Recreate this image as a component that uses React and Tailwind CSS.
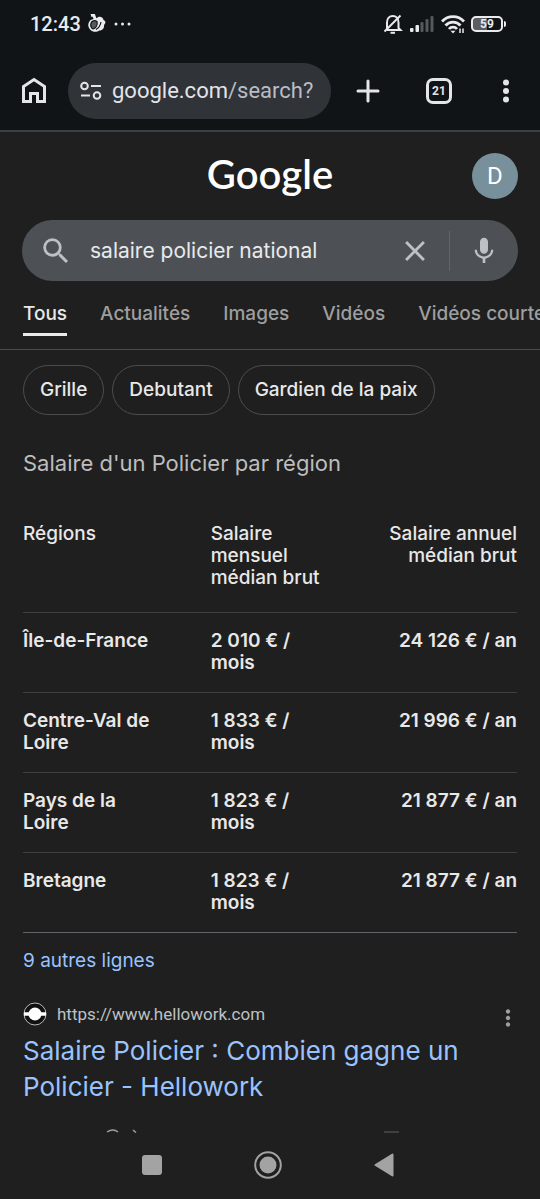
import React, { useState } from "react";
import { MdSearch, MdClose, MdMic, MdMoreVert } from "react-icons/md";

const tabs = ["Tous", "Actualités", "Images", "Vidéos", "Vidéos courtes"];

const chips = ["Grille", "Debutant", "Gardien de la paix"];

const rows = [
  { region: "Île-de-France", monthly: "2 010 € / mois", yearly: "24 126 € / an" },
  { region: "Centre-Val de Loire", monthly: "1 833 € / mois", yearly: "21 996 € / an" },
  { region: "Pays de la Loire", monthly: "1 823 € / mois", yearly: "21 877 € / an" },
  { region: "Bretagne", monthly: "1 823 € / mois", yearly: "21 877 € / an" },
];

const StatusBar = () => (
  <div className="flex h-12 items-center justify-between pl-[30px] pr-[34px] text-[#e8eaed]">
    <div className="flex items-center gap-1.5">
      <span className="font-['Roboto',sans-serif] text-xl font-medium leading-6">12:43</span>
      <svg width="20" height="20" viewBox="0 0 20 20" fill="none">
        <path d="M4 1.5l2.5-.8L8.5 6" stroke="currentColor" strokeWidth="3" />
        <path d="M10 4c2-2.5 6.5-1 6.5 2 2.5 1 2.5 3 .5 5 .5 3-1.5 5.5-4.5 5.5-3 2-7 1.5-9-.5-3-3-3-7 0-10z" fill="currentColor" />
        <path d="M4.5 8c-1.8 3.5-.5 6 1.5 7 3-1 4.8-4 4-7.500-1.500-1-4-1-5.500.5z" fill="#55595c" stroke="#101417" strokeWidth="1.2" />
        <path d="M14 8c-.5 3-2.5 6-5 7.5" stroke="#101417" strokeWidth="1.2" />
      </svg>
      <svg width="18" height="20" viewBox="0 0 18 20" fill="currentColor">
        <circle cx="3" cy="10" r="1.5" />
        <circle cx="9.5" cy="10" r="1.5" />
        <circle cx="16" cy="10" r="1.5" />
      </svg>
    </div>
    <div className="flex items-center gap-1.5">
      <svg width="20" height="20" viewBox="0 0 20 20" fill="none" stroke="currentColor" strokeWidth="2">
        <path d="M4 15V8.500C4 4.500 6.500 2 9.800 2s5.700 2.500 5.700 6.500V14l2 2H4" />
        <path d="M1.500 17.500L17.500 1.500" />
        <path d="M7.500 18.800h4.500" />
      </svg>
      <svg width="26" height="18" viewBox="0 0 26 18" fill="currentColor">
        <rect x="1" y="13" width="3.5" height="4" rx="1" />
        <rect x="6.5" y="10" width="3.5" height="7" rx="1" />
        <g fill="#55595c">
          <rect x="11.5" y="7" width="3" height="10" rx="1" />
          <rect x="16.5" y="4" width="3" height="13" rx="1" />
          <rect x="21.5" y="1" width="3" height="16" rx="1" />
        </g>
      </svg>
      <svg width="24" height="20" viewBox="0 0 24 20" fill="none" stroke="currentColor" strokeWidth="2.8">
        <path d="M1 7.5c6-6.500 16-6.500 22 0" />
        <path d="M4.500 11.5c4-4.500 11-4.500 15 0" />
        <path d="M8 15c2-2.500 6-2.500 8 0" />
        <path d="M12 19.5l-2.500-2.800h5z" fill="currentColor" stroke="none" />
        <path d="M19 14.5v4.500M22 14.5v4.500" strokeWidth="1.5" />
      </svg>
      <div className="flex items-center">
        <div className="flex h-4 w-8 items-center justify-center rounded-[5px] border-2 border-current bg-linear-to-r from-[#5a5e61] from-50% to-transparent to-50% font-['Roboto',sans-serif] text-xs font-bold">
          59
        </div>
        <div className="ml-px h-1.5 w-0.5 rounded-r bg-current" />
      </div>
    </div>
  </div>
);

const BrowserBar = () => (
  <div className="flex h-[84px] items-center border-b-2 border-[#3c4043] pl-5 pr-6 pt-1 text-[#e3e5ea]">
    <button type="button" aria-label="Accueil">
      <svg width="28" height="28" viewBox="0 0 28 28" fill="none" stroke="currentColor" strokeWidth="3">
        <path d="M3.5 24.5v-15L14 2.5l10.5 7v15h-7v-8h-7v8z" />
      </svg>
    </button>
    <div className="ml-5 flex h-14 min-w-0 flex-1 items-center gap-2.5 rounded-full bg-[#303338] pl-3 pr-3">
      <svg className="shrink-0" width="22" height="20" viewBox="0 0 22 20" fill="none" stroke="currentColor" strokeWidth="2">
        <circle cx="4.5" cy="5" r="3.3" />
        <path d="M11 5h10M1 14.5h9" />
        <circle cx="17" cy="14.5" r="3.3" />
      </svg>
      <button type="button" className="overflow-hidden whitespace-nowrap font-['Roboto',sans-serif] text-[22px] leading-7">
        google.com<span className="text-[#b9bdc6]">/search?</span>
      </button>
    </div>
    <button type="button" aria-label="Nouvel onglet" className="ml-6">
      <svg width="26" height="26" viewBox="0 0 26 26" stroke="currentColor" strokeWidth="3" strokeLinecap="round">
        <path d="M13 3v20M3 13h20" />
      </svg>
    </button>
    <button
      type="button"
      aria-label="Onglets ouverts"
      className="ml-[45px] flex size-[26px] items-center justify-center rounded-[7px] border-[3px] border-current font-['Roboto',sans-serif] text-xs font-bold"
    >
      21
    </button>
    <button type="button" aria-label="Menu" className="ml-11">
      <svg width="20" height="26" viewBox="0 0 20 26" fill="currentColor">
        <circle cx="10" cy="4.5" r="3" />
        <circle cx="10" cy="13" r="3" />
        <circle cx="10" cy="21.5" r="3" />
      </svg>
    </button>
  </div>
);

const SearchHeader = () => {
  const [query, setQuery] = useState("salaire policier national");

  return (
    <header className="px-[22px]">
      <div className="grid h-[88px] grid-cols-3 items-center">
        <span />
        <a href="#" className="justify-self-center pb-1 font-['Lato',sans-serif] text-[40px] font-semibold leading-12 text-white">
          Google
        </a>
        <button
          type="button"
          aria-label="Compte"
          className="flex size-[46px] items-center justify-center justify-self-end rounded-full bg-[#78909c] font-['Roboto',sans-serif] text-2xl text-white"
        >
          D
        </button>
      </div>
      <form onSubmit={(e) => e.preventDefault()} className="flex h-[61px] items-center rounded-full bg-[#4d5156] text-[#bdc1c6]">
        <button type="submit" aria-label="Rechercher" className="ml-[17px]">
          <MdSearch size={34} />
        </button>
        <input
          type="text"
          aria-label="Recherche"
          value={query}
          onChange={(e) => setQuery(e.target.value)}
          className="ml-[17px] min-w-0 flex-1 text-[21px] text-[#e8eaed] outline-none"
        />
        <button type="button" aria-label="Effacer" onClick={() => setQuery("")}>
          <MdClose size={34} />
        </button>
        <div className="ml-[17px] h-10 w-px bg-[#606368]" />
        <button type="button" aria-label="Recherche vocale" className="mx-[18px]">
          <MdMic size={32} />
        </button>
      </form>
    </header>
  );
};

const Tabs = () => (
  <nav className="flex gap-[33px] overflow-hidden border-b border-[#4a4d50] pb-[13px] pl-[23px] pt-5">
    {tabs.map((tab, i) => (
      <a
        key={tab}
        href="#"
        className={`whitespace-nowrap border-b-[3px] pb-1.5 text-[19px] font-medium leading-[26px] ${
          i === 0 ? "border-[#e8eaed] text-[#e8e8e8]" : "border-transparent text-[#9e9e9e]"
        }`}
      >
        {tab}
      </a>
    ))}
  </nav>
);

const SalaryTable = () => (
  <table className="mt-7 w-full table-fixed text-left align-top text-[19px] font-medium leading-[22px] text-[#e8e8e8]">
    <thead>
      <tr className="border-b border-[#3c4043] align-top">
        <th className="w-[38%] pb-[23px] pt-4 font-medium">Régions</th>
        <th className="w-[28%] pb-[23px] pt-4 font-medium">Salaire mensuel médian brut</th>
        <th className="w-[34%] pb-[23px] pl-6 pt-4 text-right font-medium">Salaire annuel médian brut</th>
      </tr>
    </thead>
    <tbody>
      {rows.map((row) => (
        <tr key={row.region} className="h-20 border-b border-[#3c4043] align-top font-semibold last:border-[#5f6368]">
          <td className="pr-12 pt-[17px]">{row.region}</td>
          <td className="pr-8 pt-[17px]">{row.monthly}</td>
          <td className="pt-[17px] text-right">{row.yearly}</td>
        </tr>
      ))}
    </tbody>
  </table>
);

const Result = () => (
  <article className="mt-6">
    <div className="flex items-center">
      <svg width="24" height="24" viewBox="0 0 24 24">
        <circle cx="12" cy="12" r="11" fill="#111" stroke="#b8b8b8" strokeWidth="1" />
        <path d="M1 12h22" stroke="#fff" strokeWidth="3.5" />
        <circle cx="12" cy="12" r="6.5" fill="#fff" />
      </svg>
      <cite className="ml-2.5 font-['Roboto',sans-serif] text-[17px] not-italic leading-6 text-[#bdc1c6]">
        https://www.hellowork.com
      </cite>
      <button type="button" aria-label="À propos de ce résultat" className="-mr-1 ml-auto mt-2 text-[#9e9e9e]">
        <MdMoreVert size={26} />
      </button>
    </div>
    <h3 className="mt-0.5 text-[26px] leading-9 text-[#99c3ff]">
      <a href="#">Salaire Policier : Combien gagne un Policier - Hellowork</a>
    </h3>
    {/* tops of the next line, hidden behind the navigation bar */}
    <svg className="mt-6 h-1 w-full" height="4" fill="none" stroke="#9e9e9e">
      <path d="M84 3q6-4 11 0M110 1l3 2.5" strokeWidth="1.5" />
      <path d="M361 3h15" stroke="#5f6368" />
    </svg>
  </article>
);

const NavigationBar = () => (
  <div className="mt-auto flex h-16 shrink-0 items-center justify-center gap-[91px] pb-1 pr-1 text-[#a3a3a3]">
    <button type="button" aria-label="Applications récentes">
      <svg width="22" height="22" viewBox="0 0 22 22" fill="currentColor">
        <rect x="1" y="1" width="20" height="20" rx="3" />
      </svg>
    </button>
    <button type="button" aria-label="Écran d'accueil">
      <svg width="28" height="28" viewBox="0 0 28 28" fill="none" stroke="currentColor" strokeWidth="2">
        <circle cx="14" cy="14" r="12.8" />
        <circle cx="14" cy="14" r="8.5" fill="currentColor" stroke="none" />
      </svg>
    </button>
    <button type="button" aria-label="Retour">
      <svg width="22" height="24" viewBox="0 0 22 24" fill="currentColor" stroke="currentColor" strokeWidth="2" strokeLinejoin="round">
        <path d="M2.5 12L19.5 1.5v21z" />
      </svg>
    </button>
  </div>
);

const App = () => {
  return (
    <div className="flex min-h-screen flex-col bg-[#1f1f1f] font-['Inter',sans-serif]">
      <div className="bg-[#101417]">
        <StatusBar />
        <BrowserBar />
      </div>
      <SearchHeader />
      <Tabs />
      <main className="px-[23px]">
        <div className="flex gap-2 pt-[15px]">
          {chips.map((chip) => (
            <button
              key={chip}
              type="button"
              className="h-[50px] whitespace-nowrap rounded-full border border-[#4a4d50] px-4 text-[19px] font-medium text-[#e8e8e8]"
            >
              {chip}
            </button>
          ))}
        </div>
        <h2 className="mt-8 text-[22px] leading-8 text-[#bdbdbd]">Salaire d'un Policier par région</h2>
        <SalaryTable />
        <a href="#" className="mt-4 inline-block text-[19px] leading-6 text-[#99c3ff]">
          9 autres lignes
        </a>
        <Result />
      </main>
      <NavigationBar />
    </div>
  );
};

export default App;
